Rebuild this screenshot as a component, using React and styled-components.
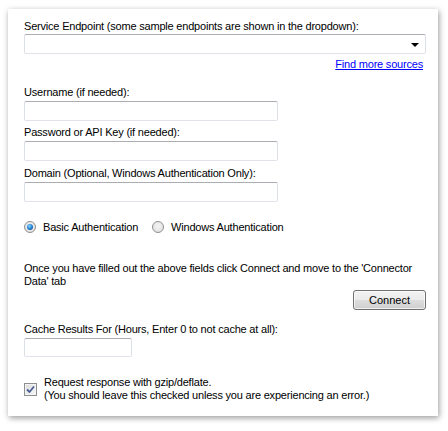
import React, { useState } from 'react';
import styled, { createGlobalStyle } from 'styled-components';

const GlobalStyle = createGlobalStyle`
  html, body {
    margin: 0;
    padding: 0;
    background: #ffffff;
  }
  body {
    font-family: "Liberation Sans", Arial, sans-serif;
    font-size: 11px;
    letter-spacing: -0.2px;
    color: #000;
  }
`;

const Page = styled.div`
  padding: 9px 10px 10px 8px;
`;

const Panel = styled.div`
  width: 430px;
  box-sizing: border-box;
  background: #fff;
  padding: 10px 12px 14px 16px;
  box-shadow: 1px 2px 6px rgba(0, 0, 0, 0.4);
  display: flex;
  flex-direction: column;
`;

const Label = styled.div`
  line-height: 14px;
  margin-top: ${(p) => p.$top || 0}px;
  margin-bottom: ${(p) => (p.$bottom === undefined ? 2 : p.$bottom)}px;
`;

const TextBox = styled.input`
  box-sizing: border-box;
  width: ${(p) => p.$width || 254}px;
  height: ${(p) => p.$height || 20}px;
  border: 1px solid #e2e3ea;
  border-top-color: #abadb3;
  border-left-color: #dbdfe6;
  border-right-color: #dbdfe6;
  border-radius: 2px;
  background: #fff;
  font: inherit;
  padding: 0 3px;
  outline: none;
`;

const SelectBox = styled.div`
  box-sizing: border-box;
  height: 20px;
  border: 1px solid #e2e3ea;
  border-top-color: #abadb3;
  border-left-color: #dbdfe6;
  border-right-color: #dbdfe6;
  border-radius: 2px;
  display: flex;
  align-items: center;
  justify-content: flex-end;
  padding-right: 6px;
`;

const Arrow = styled.span`
  width: 0;
  height: 0;
  border-left: 4px solid transparent;
  border-right: 4px solid transparent;
  border-top: 4px solid #000;
  margin-top: 1px;
`;

const LinkRow = styled.div`
  display: flex;
  justify-content: flex-end;
  padding-right: 3px;
  margin-top: 3px;
  line-height: 14px;
`;

const SourceLink = styled.a`
  color: #0000ff;
  text-decoration: underline;
`;

const RadioRow = styled.div`
  display: flex;
  align-items: center;
  margin-top: 18px;
  height: 14px;
`;

const RadioOption = styled.label`
  display: flex;
  align-items: center;
  gap: 7px;
  margin-right: 14px;
  cursor: pointer;
`;

const RadioCircle = styled.span`
  box-sizing: border-box;
  width: 12px;
  height: 12px;
  border-radius: 50%;
  border: 1px solid #8e8f8f;
  background: radial-gradient(circle at 50% 40%, #f4f4f4 0%, #dcdcdc 100%);
  display: flex;
  align-items: center;
  justify-content: center;

  &::after {
    content: '';
    display: ${(p) => (p.$checked ? 'block' : 'none')};
    width: 6px;
    height: 6px;
    border-radius: 50%;
    background: radial-gradient(circle at 40% 35%, #8fd6ff 0%, #2b8ad6 45%, #0d3d7a 100%);
  }
`;

const Note = styled.div`
  margin-top: 28px;
  line-height: 13px;
`;

const ButtonRow = styled.div`
  display: flex;
  justify-content: flex-end;
  margin-top: 2px;
`;

const Button = styled.button`
  width: 73px;
  height: 20px;
  box-sizing: border-box;
  border: 1px solid #707070;
  border-radius: 3px;
  background: linear-gradient(#f2f2f2 0%, #ebebeb 50%, #dddddd 51%, #cfcfcf 100%);
  box-shadow: inset 0 0 0 1px rgba(255, 255, 255, 0.7);
  font: inherit;
  color: #000;
  padding: 0;
`;

const CheckRow = styled.label`
  display: flex;
  align-items: center;
  gap: 7px;
  margin-top: 19px;
  line-height: 13px;
`;

const CheckBox = styled.span`
  box-sizing: border-box;
  width: 13px;
  height: 13px;
  flex: none;
  border: 1px solid #8e8f8f;
  background: linear-gradient(135deg, #dcdcdc 0%, #f8f8f8 100%);
  box-shadow: inset 0 0 0 1px #f4f4f4;
  display: flex;
  align-items: center;
  justify-content: center;
`;

export default function App() {
  const [auth, setAuth] = useState('basic');

  return (
    <Page>
      <GlobalStyle />
      <Panel>
        <Label $bottom={1}>Service Endpoint (some sample endpoints are shown in the dropdown):</Label>
        <SelectBox>
          <Arrow />
        </SelectBox>
        <LinkRow>
          <SourceLink href="#">Find more sources</SourceLink>
        </LinkRow>

        <Label $top={14}>Username (if needed):</Label>
        <TextBox />

        <Label $top={4}>Password or API Key (if needed):</Label>
        <TextBox type="text" />

        <Label $top={5}>Domain (Optional, Windows Authentication Only):</Label>
        <TextBox />

        <RadioRow>
          <RadioOption onClick={() => setAuth('basic')}>
            <RadioCircle $checked={auth === 'basic'} />
            Basic Authentication
          </RadioOption>
          <RadioOption onClick={() => setAuth('windows')}>
            <RadioCircle $checked={auth === 'windows'} />
            Windows Authentication
          </RadioOption>
        </RadioRow>

        <Note>
          Once you have filled out the above fields click Connect and move to the 'Connector Data' tab
        </Note>
        <ButtonRow>
          <Button>Connect</Button>
        </ButtonRow>

        <Label $top={12}>Cache Results For (Hours, Enter 0 to not cache at all):</Label>
        <TextBox $width={108} $height={19} />

        <CheckRow>
          <CheckBox>
            <svg width="9" height="9" viewBox="0 0 9 9">
              <path d="M1 4.5 L3.5 7 L8 1.5" fill="none" stroke="#4a5f97" strokeWidth="1.8" />
            </svg>
          </CheckBox>
          <div>
            Request response with gzip/deflate.
            <br />
            (You should leave this checked unless you are experiencing an error.)
          </div>
        </CheckRow>
      </Panel>
    </Page>
  );
}
